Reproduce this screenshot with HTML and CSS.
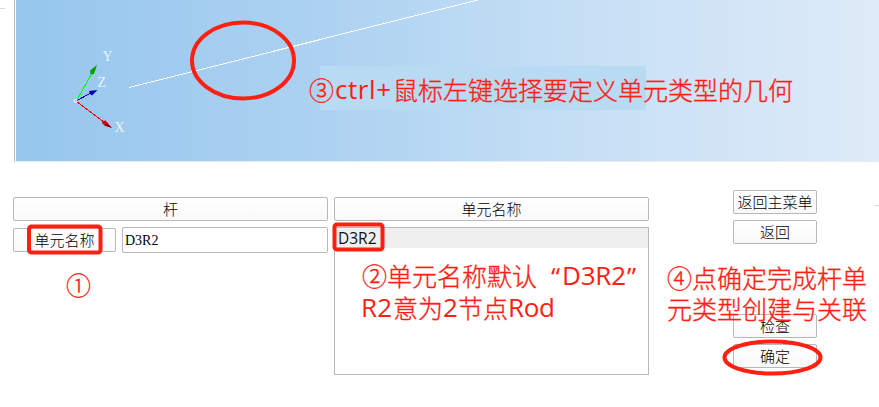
FILE: index.html
```
<!DOCTYPE html>
<html lang="zh-CN">
<head>
<meta charset="utf-8">
<title>单元名称</title>
<link rel="stylesheet" href="styles.css">
</head>
<body>
<main class="app">
  <section class="viewport">
    <svg class="scene" width="863" height="161" viewBox="16 0 863 161">
      <rect x="320" y="66" width="326" height="44" fill="#b9daf3"/>
      <path d="M129 87.5L478 0" stroke="#fff" fill="none" shape-rendering="crispEdges"/>
      <g fill="none" shape-rendering="crispEdges">
        <path d="M77 100L92 73" stroke="#00ff00"/>
        <path d="M76 101L91 93" stroke="#0000e0"/>
        <path d="M77 102L104 122" stroke="#f00000"/>
      </g>
      <path d="M97 65L90 70.500L90.500 74.500L94 74Z" fill="#00a000"/>
      <path d="M97.500 90L89 91L90 94L92 95.500Z" fill="#0000b0"/>
      <path d="M112 128L105.500 120.500L102 121.500L102.500 124Z" fill="#cc0000"/>
      <path d="M104 125.500L112 128L107 123.500Z" fill="#780000"/>
      <circle cx="75.500" cy="101" r="1.500" fill="none" stroke="#fff"/>
      <g class="axis">
        <text x="102.500" y="61">Y</text>
        <text x="97.500" y="87">Z</text>
        <text x="114.500" y="132">X</text>
      </g>
    </svg>
  </section>
  <section class="panel">
    <div class="column">
      <button class="btn">杆</button>
      <div class="field">
        <button class="btn field-name">单元名称</button>
        <input class="input" value="D3R2">
      </div>
    </div>
    <div class="column">
      <button class="btn">单元名称</button>
      <div class="list"><div class="item">D3R2</div></div>
    </div>
    <div class="actions">
      <button class="btn">返回主菜单</button>
      <button class="btn">返回</button>
      <button class="btn check">检查</button>
      <button class="btn">确定</button>
    </div>
  </section>
  <svg class="notes" width="879" height="407" viewBox="0 0 879 407">
    <path d="M0 8.500H5M875 205.500H879" stroke="#d8d8d8"/>
    <g fill="none" stroke="#ff2012" stroke-width="4">
      <ellipse cx="243" cy="60.500" rx="51" ry="38"/>
      <rect x="29" y="226.500" width="71.500" height="26" rx="2.500"/>
      <rect x="334.500" y="224.500" width="48" height="25" rx="2.500"/>
      <ellipse cx="772.500" cy="357.500" rx="48" ry="16"/>
    </g>
    <g class="note">
      <text x="66" y="295">①</text>
      <text x="309" y="100">③<tspan class="latin" x="335" y="99" textLength="56">ctrl+</tspan><tspan x="393" y="100">鼠标左键选择要定义单元类型的几何</tspan></text>
      <text x="362" y="286">②单元名称默认<tspan x="551" class="latin">“</tspan><tspan class="latin" x="562" y="285" textLength="64">D3R2</tspan><tspan x="627" y="286" class="latin">”</tspan></text>
      <text x="362" y="318"><tspan class="latin" x="361" y="317" textLength="31">R2</tspan><tspan x="393" y="318">意为</tspan><tspan class="latin" x="443" y="317">2</tspan><tspan x="458" y="318">节点</tspan><tspan class="latin" x="508" y="317" textLength="47">Rod</tspan></text>
      <text x="667" y="288">④点确定完成杆单</text>
      <text x="667" y="319">元类型创建与关联</text>
    </g>
  </svg>
</main>
</body>
</html>
```
FILE: styles.css
```
* { box-sizing: border-box; }
body { margin: 0; background: #fff; overflow: hidden; }
.app { position: relative; width: 879px; height: 407px; }
.viewport {
  height: 162px;
  margin-left: 14px;
  border-left: 1px solid #b8b8b8;
  border-bottom: 1px solid #e6eef4;
  padding-left: 1px;
}
.scene {
  display: block;
  background: linear-gradient(90deg, #96c6ed 0%, #add2f1 36%, #c6dff5 65%, #deebf8 100%);
}
.axis { font: 14px "Liberation Serif", serif; fill: #e9f4fd; }
.panel { display: flex; gap: 6px; padding: 28px 0 0 13px; }
.column { width: 315px; display: flex; flex-direction: column; gap: 6px; padding-top: 7px; }
.btn {
  height: 24px;
  padding: 0;
  border: 1px solid #b8b8b8;
  border-radius: 2px;
  background: linear-gradient(#fff, #f9f9f9);
  color: #000;
  font: 15px/22px "Noto Sans CJK SC", sans-serif;
  font-weight: 300;
  white-space: nowrap;
}
.field { display: flex; align-items: center; gap: 6px; }
.field-name { width: 103px; }
.input {
  width: 206px;
  height: 26px;
  padding: 2px 2px 0;
  border: 1px solid #b8b8b8;
  border-radius: 2px;
  background: #fff;
  color: #000;
  font: 14px "Liberation Serif", serif;
}
.list { height: 148px; border: 1px solid #b8b8b8; }
.item {
  height: 20px;
  padding-left: 3px;
  background: #efefef;
  color: #111;
  font: 15.5px/21px "Open Sans", sans-serif;
}
.actions { width: 84px; margin-left: 78px; display: flex; flex-direction: column; gap: 6px; }
.check { margin-top: 64px; }
.notes { position: absolute; left: 0; top: 0; pointer-events: none; }
.note {
  font: 300 25px "Noto Sans CJK SC", sans-serif;
  fill: #ff2012;
  stroke: #ff2012;
  stroke-width: 0.35px;
}
.latin { font: 26px "Open Sans", "Noto Sans", sans-serif; stroke: none; }
```
